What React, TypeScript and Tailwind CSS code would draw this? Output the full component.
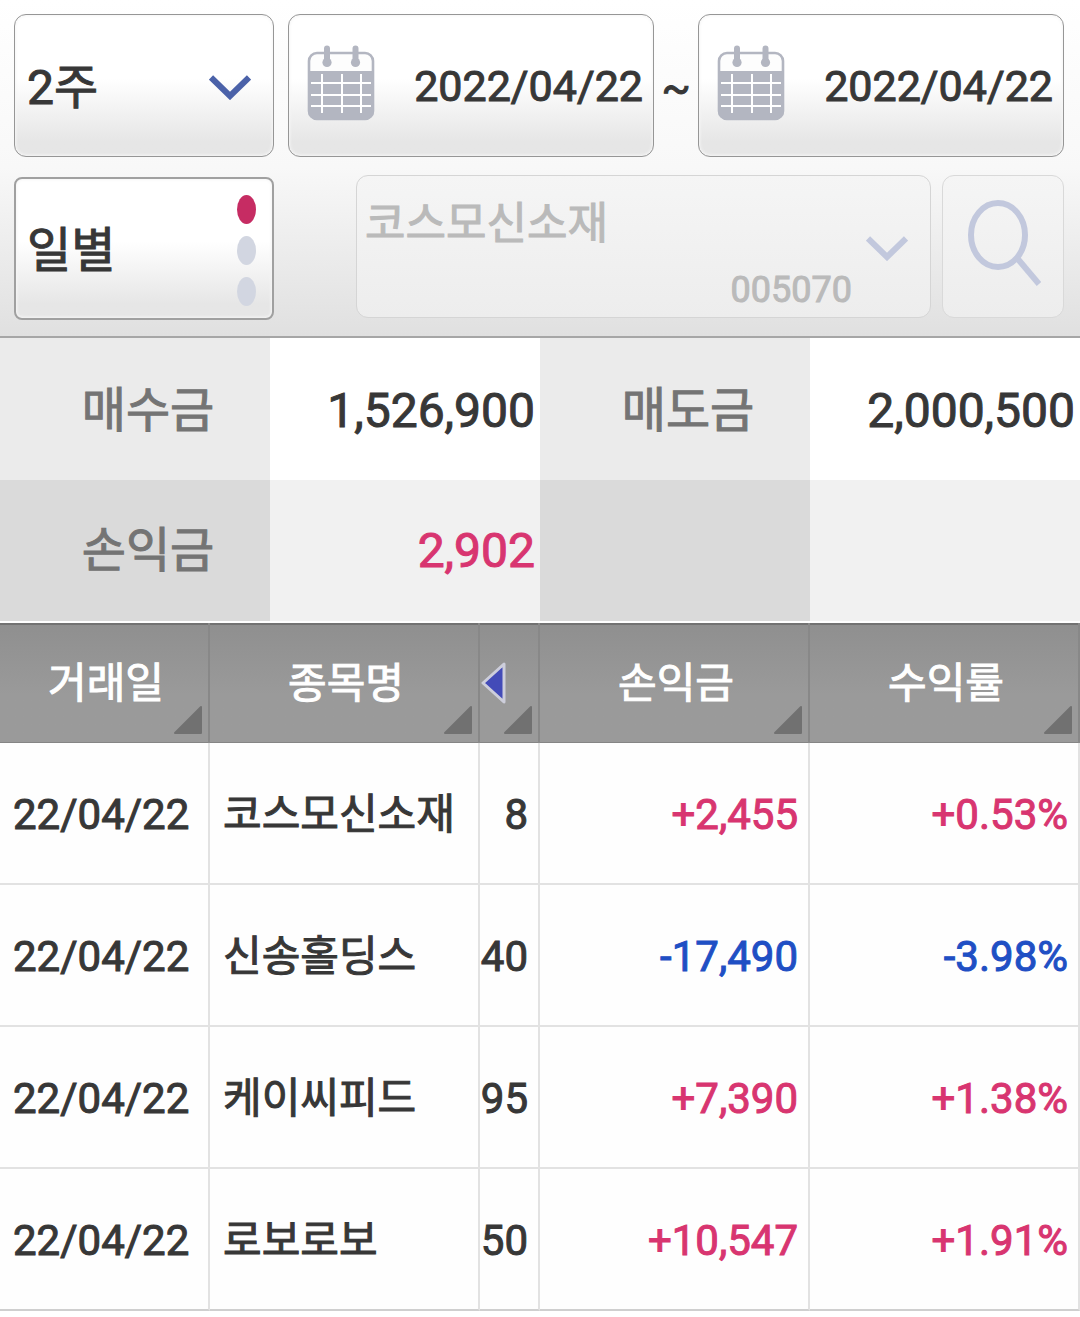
import { type ReactNode } from "react";

const trades = [
  { name: "코스모신소재", qty: "8", profit: "+2,455", rate: "+0.53%" },
  { name: "신송홀딩스", qty: "40", profit: "-17,490", rate: "-3.98%" },
  { name: "케이씨피드", qty: "95", profit: "+7,390", rate: "+1.38%" },
  { name: "로보로보", qty: "50", profit: "+10,547", rate: "+1.91%" },
];

const tone = (value: string) => (value.startsWith("-") ? "text-[#1f4fc4]" : "text-[#d83570]");

function Chevron({ className }: { className: string }) {
  return (
    <svg aria-hidden="true" viewBox="0 0 42 26" className={`pointer-events-none h-[26px] w-[42px] shrink-0 ${className}`}>
      <path d="M2 3.500 21 22 40 3.500" fill="none" stroke="currentColor" strokeWidth="6" />
    </svg>
  );
}

function CalendarIcon() {
  return (
    <svg aria-hidden="true" viewBox="0 0 68 76" className="h-[76px] w-[68px]">
      <rect x="2" y="8" width="64" height="66" rx="8" fill="#fdfdfd" stroke="#b3b6c1" strokeWidth="2.600" />
      <path d="M1 26h66v40a8 8 0 0 1-8 8H9a8 8 0 0 1-8-8z" fill="#b3b6c1" />
      <path d="M4 38h60M4 50h60M4 61h60M15 29v39M35 29v39M54 29v39" stroke="#fff" strokeWidth="2" />
      <path d="M20 3.500v14M48.500 3.500v14" stroke="#b3b6c1" strokeWidth="6" strokeLinecap="round" />
      <circle cx="20" cy="17.500" r="4.600" fill="#b3b6c1" />
      <circle cx="48.500" cy="17.500" r="4.600" fill="#b3b6c1" />
    </svg>
  );
}

function DateField({ label }: { label: string }) {
  return (
    <div className="flex h-[143px] min-w-0 flex-1 items-center rounded-xl border border-[#969696] bg-linear-to-b from-white from-45% to-[#e6e6e6] to-90% pr-[10px] pl-[18px] shadow-[inset_0_0_3px_1px_#f6f6f6]">
      <button type="button" aria-label={`${label} 달력`} className="shrink-0 pb-[6px]">
        <CalendarIcon />
      </button>
      <input aria-label={label} defaultValue="2022/04/22" className="h-16 w-full min-w-0 bg-transparent pt-[2px] text-right text-[43px]" />
    </div>
  );
}

function HeaderCell({ children }: { children: ReactNode }) {
  return (
    <th scope="col" className="border-r-2 border-[#888888] p-0 font-normal">
      <button type="button" className="relative flex h-[118px] w-full items-center justify-center pt-[2px] pl-[4px]">
        {children}
        <svg aria-hidden="true" viewBox="0 0 30 30" className="absolute right-[5px] bottom-[7px] size-[30px]">
          <path d="M2 28 28 2V28Z" fill="#717171" stroke="#717171" strokeWidth="2" strokeLinejoin="round" />
        </svg>
      </button>
    </th>
  );
}

export default function App() {
  return (
    <main className="bg-[#fefefe] font-['Roboto','Noto_Sans_CJK_KR',sans-serif] font-normal text-[#373737] [-webkit-text-stroke:1px]">
      <form className="border-b-2 border-[#a6a6a6] bg-linear-to-b from-white via-[#f8f8f8] to-[#e0e0e0] pt-[14px] pr-4 pb-4 pl-[14px]">
        <div className="flex items-center">
          <div className="relative mr-[14px] flex h-[143px] w-[260px] shrink-0 items-center rounded-xl border border-[#969696] bg-linear-to-b from-white from-45% to-[#e6e6e6] to-90% pt-[2px] shadow-[inset_0_0_3px_1px_#f6f6f6]">
            <select aria-label="조회 기간" className="size-full appearance-none bg-transparent pt-[2px] pl-3 text-[48px]">
              <option>2주</option>
            </select>
            <Chevron className="absolute right-[22px] text-[#4b62a9]" />
          </div>
          <DateField label="시작일" />
          <span className="w-11 pt-1 text-center text-[43px]">~</span>
          <DateField label="종료일" />
        </div>

        <div className="mt-[18px] flex h-[145px] items-start">
          <button type="button" className="flex h-[143px] w-[260px] shrink-0 items-center justify-between self-end rounded-lg border-2 border-[#a0a0a0] bg-linear-to-b from-white from-45% to-[#e6e6e6] to-90% pt-[4px] pr-4 pl-[11px] text-[48px] shadow-[inset_0_0_3px_1px_#f6f6f6]">
            일별
            <span className="flex flex-col gap-3">
              <span className="h-[29px] w-[19px] rounded-[50%] bg-[#c62c63]" />
              <span className="h-[29px] w-[19px] rounded-[50%] bg-[#d2d6e1]" />
              <span className="h-[29px] w-[19px] rounded-[50%] bg-[#d2d6e1]" />
            </span>
          </button>
          <div className="ml-[82px] flex h-[143px] min-w-0 flex-1 items-center rounded-xl border border-[#d5d5d5] bg-linear-to-b from-[#f5f5f5] to-[#ededed] pt-[2px] pr-[22px] pl-2 text-[#bababa]">
            <div className="flex min-w-0 flex-1 flex-col pt-3">
              <select disabled aria-label="종목" className="h-[72px] w-full appearance-none bg-transparent text-[44px] opacity-100">
                <option>코스모신소재</option>
              </select>
              <span className="pr-[14px] text-right text-[36px] leading-[60px]">005070</span>
            </div>
            <Chevron className="text-[#c2c8dd]" />
          </div>
          <button type="button" disabled aria-label="종목 검색" className="ml-[11px] flex h-[143px] w-[122px] shrink-0 items-center justify-center rounded-xl border border-[#d9d9d9] bg-linear-to-b from-[#f5f5f5] to-[#ededed] pb-[6px] pl-[2px]">
            <svg aria-hidden="true" viewBox="0 0 74 88" className="h-[88px] w-[74px]">
              <ellipse cx="31" cy="35" rx="27" ry="32" fill="none" stroke="#c2c8dd" strokeWidth="6" />
              <path d="m50 58 22 26" stroke="#c2c8dd" strokeWidth="6" />
            </svg>
          </button>
        </div>
      </form>

      <table className="w-full table-fixed border-collapse text-[48px] leading-[60px]">
        <tbody>
          <tr className="h-[142px]">
            <th scope="row" className="bg-[#ebebeb] pt-1 pr-0 pl-[26px] font-normal text-[#747474]">매수금</th>
            <td className="bg-white pt-1 pr-[5px] text-right">1,526,900</td>
            <th scope="row" className="bg-[#ebebeb] pt-1 pr-0 pl-[26px] font-normal text-[#747474]">매도금</th>
            <td className="bg-white pt-1 pr-[5px] text-right">2,000,500</td>
          </tr>
          <tr className="h-[141px]">
            <th scope="row" className="bg-[#dadada] pr-0 pl-[26px] font-normal text-[#747474]">손익금</th>
            <td className="bg-[#f1f1f1] pr-[5px] text-right text-[#d83570]">2,902</td>
            <td className="bg-[#dadada]" />
            <td className="bg-[#f1f1f1]" />
          </tr>
        </tbody>
      </table>

      <table className="mt-[2px] w-full table-fixed border-separate border-spacing-0 text-[42px] leading-[60px]">
        <colgroup>
          <col className="w-[210px]" />
          <col className="w-[270px]" />
          <col className="w-[60px]" />
          <col className="w-[270px]" />
          <col className="w-[270px]" />
        </colgroup>
        <thead className="bg-linear-to-b from-[#8f8f8f] to-[#9a9a9a] to-60% text-white shadow-[inset_0_2px_0_#727272,inset_0_-1px_0_#858585]">
          <tr className="h-[120px]">
            <HeaderCell>거래일</HeaderCell>
            <HeaderCell>종목명</HeaderCell>
            <HeaderCell>
              <svg role="img" aria-label="열 접기" viewBox="0 0 26 44" className="mr-[34px] h-[44px] w-[26px] shrink-0">
                <path d="M2 21 23 2V40Z" fill="#434bb8" stroke="#cdcedb" strokeWidth="3" strokeLinejoin="round" />
              </svg>
            </HeaderCell>
            <HeaderCell>손익금</HeaderCell>
            <HeaderCell>수익률</HeaderCell>
          </tr>
        </thead>
        <tbody>
          {trades.map((trade) => (
            <tr key={trade.name} className="h-[142px] *:border-r-2 *:border-b-2 *:border-[#e2e2e2] *:pt-1 last:*:border-b-[#cfcfcf]">
              <td className="pl-[13px]">22/04/22</td>
              <td className="pl-[13px] whitespace-nowrap">{trade.name}</td>
              <td className="pr-[10px] text-right">{trade.qty}</td>
              <td className={`pr-[10px] text-right ${tone(trade.profit)}`}>{trade.profit}</td>
              <td className={`pr-[10px] text-right ${tone(trade.rate)}`}>{trade.rate}</td>
            </tr>
          ))}
        </tbody>
      </table>
    </main>
  );
}
